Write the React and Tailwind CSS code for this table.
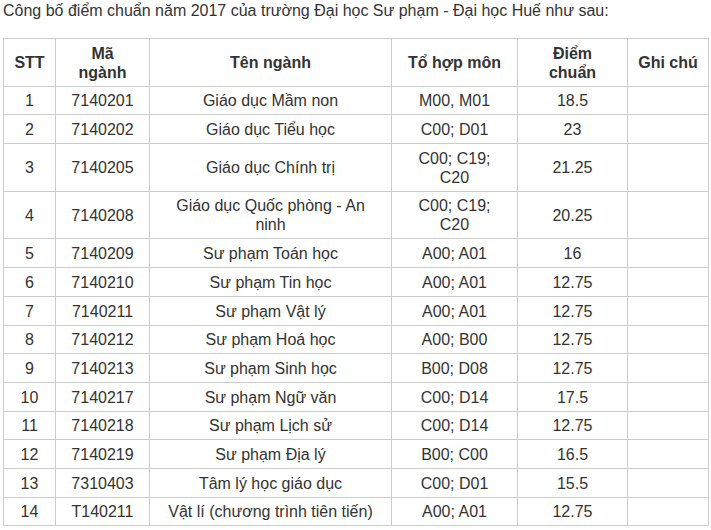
import React from "react";

const rows = [
  ["1", "7140201", "Giáo dục Mầm non", "M00, M01", "18.5"],
  ["2", "7140202", "Giáo dục Tiểu học", "C00; D01", "23"],
  ["3", "7140205", "Giáo dục Chính trị", ["C00; C19;", "C20"], "21.25"],
  ["4", "7140208", ["Giáo dục Quốc phòng - An", "ninh"], ["C00; C19;", "C20"], "20.25"],
  ["5", "7140209", "Sư phạm Toán học", "A00; A01", "16"],
  ["6", "7140210", "Sư phạm Tin học", "A00; A01", "12.75"],
  ["7", "7140211", "Sư phạm Vật lý", "A00; A01", "12.75"],
  ["8", "7140212", "Sư phạm Hoá học", "A00; B00", "12.75"],
  ["9", "7140213", "Sư phạm Sinh học", "B00; D08", "12.75"],
  ["10", "7140217", "Sư phạm Ngữ văn", "C00; D14", "17.5"],
  ["11", "7140218", "Sư phạm Lịch sử", "C00; D14", "12.75"],
  ["12", "7140219", "Sư phạm Địa lý", "B00; C00", "16.5"],
  ["13", "7310403", "Tâm lý học giáo dục", "C00; D01", "15.5"],
  ["14", "T140211", "Vật lí (chương trình tiên tiến)", "A00; A01", "12.75"],
];

function Cell({ v }) {
  if (Array.isArray(v)) {
    return (
      <>
        {v[0]}
        <br />
        {v[1]}
      </>
    );
  }
  return v;
}

export default function App() {
  const td = "border border-[#cccccc] px-[6px] pt-[4.7px] pb-[4px] text-center align-middle";
  const th = "border border-[#cccccc] px-[6px] pt-[4.7px] pb-[4px] text-center align-middle font-bold";
  return (
    <div
      className="w-[711px] h-[530px] bg-white pl-[3px] text-[16px] leading-[19px] text-[#333333] overflow-hidden"
      style={{ fontFamily: '"Liberation Sans", Arial, sans-serif' }}
    >
      <p className="leading-[22px] mb-[16px] whitespace-nowrap">
        Công bố điểm chuẩn năm 2017 của trường Đại học Sư phạm - Đại học Huế như sau:
      </p>
      <table className="table-fixed border-collapse w-[705px]">
        <colgroup>
          <col className="w-[52px]" />
          <col className="w-[94px]" />
          <col className="w-[242px]" />
          <col className="w-[126px]" />
          <col className="w-[110px]" />
          <col className="w-[81px]" />
        </colgroup>
        <thead>
          <tr>
            <th className={th}>STT</th>
            <th className={th}>
              Mã
              <br />
              ngành
            </th>
            <th className={th}>Tên ngành</th>
            <th className={th}>Tổ hợp môn</th>
            <th className={th}>
              Điểm
              <br />
              chuẩn
            </th>
            <th className={th}>Ghi chú</th>
          </tr>
        </thead>
        <tbody>
          {rows.map((r) => (
            <tr key={r[0]}>
              <td className={td}>{r[0]}</td>
              <td className={td}>{r[1]}</td>
              <td className={td}>
                <Cell v={r[2]} />
              </td>
              <td className={td}>
                <Cell v={r[3]} />
              </td>
              <td className={td}>{r[4]}</td>
              <td className={td}></td>
            </tr>
          ))}
        </tbody>
      </table>
    </div>
  );
}
